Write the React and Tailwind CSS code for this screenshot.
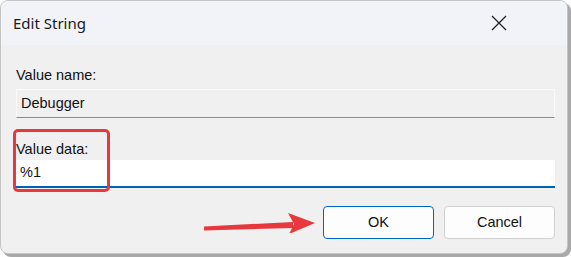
import React from "react";

const titleFont = { fontFamily: '"Noto Sans", "Open Sans", sans-serif' };
const bodyFont = { fontFamily: '"Liberation Sans", Arial, sans-serif' };

const App = () => {
  return (
    <div className="w-[571px] h-[257px] bg-white overflow-hidden">
      <div className="relative w-[568px] h-[254px] rounded-lg border border-[#c4c4c4] bg-[#f0f0f0] shadow-[3px_3px_0_0_#a9a9a9] overflow-hidden flex flex-col">
        {/* title bar */}
        <div className="h-[44px] bg-[#f1f3f9] flex items-center justify-between pl-[12px] pr-[60px]" style={titleFont}>
          <span className="text-[15px] text-[#1a1a1a] leading-none">Edit String</span>
          <svg width="16" height="16" viewBox="0 0 16 16" className="text-[#222]">
            <path d="M1 1 L15 15 M15 1 L1 15" stroke="currentColor" strokeWidth="1.3" fill="none" />
          </svg>
        </div>

        {/* body */}
        <div className="flex flex-col pl-[15px] pr-[12px] pt-[20px]" style={bodyFont}>
          <span className="text-[14.5px] text-[#111] leading-[20px]">Value name:</span>
          <div className="mt-[4px] w-[539px] h-[29px] bg-[#f0f0f0] border border-[#fafafa] border-b-[#8a8a8a] flex items-center px-[4px] text-[14.5px] text-[#111]">
            Debugger
          </div>

          <span className="mt-[21px] text-[14.5px] text-[#111] leading-[20px]">Value data:</span>
          <div className="mt-[1px] w-[539px] h-[28px] bg-white border-b-2 border-[#0063b1] flex items-center px-[4px] text-[14.5px] text-[#111]">
            %1
          </div>

          <div className="mt-[18px] flex justify-end gap-[10px]">
            <button className="w-[111px] h-[33px] rounded-[4px] bg-[#fdfdfd] border border-[#0067c0] text-[14.5px] text-[#111]">
              OK
            </button>
            <button className="w-[111px] h-[33px] rounded-[4px] bg-[#fdfdfd] border border-[#d0d0d0] text-[14.5px] text-[#111]">
              Cancel
            </button>
          </div>
        </div>

        {/* annotation: red highlight box */}
        <div className="absolute left-[12px] top-[128px] w-[97px] h-[63px] rounded-[5px] border-[3px] border-[#e8383d]" />

        {/* annotation: red arrow */}
        <svg className="absolute left-[200px] top-[208px]" width="120" height="24" viewBox="0 0 120 24">
          <path d="M3 17.5 L92 13 L92 19 L3 21.5 Z" fill="#e8383d" />
          <path d="M87 4 L114 14 L88 25 L93 15 Z" fill="#e8383d" />
        </svg>
      </div>
    </div>
  );
};

export default App;
